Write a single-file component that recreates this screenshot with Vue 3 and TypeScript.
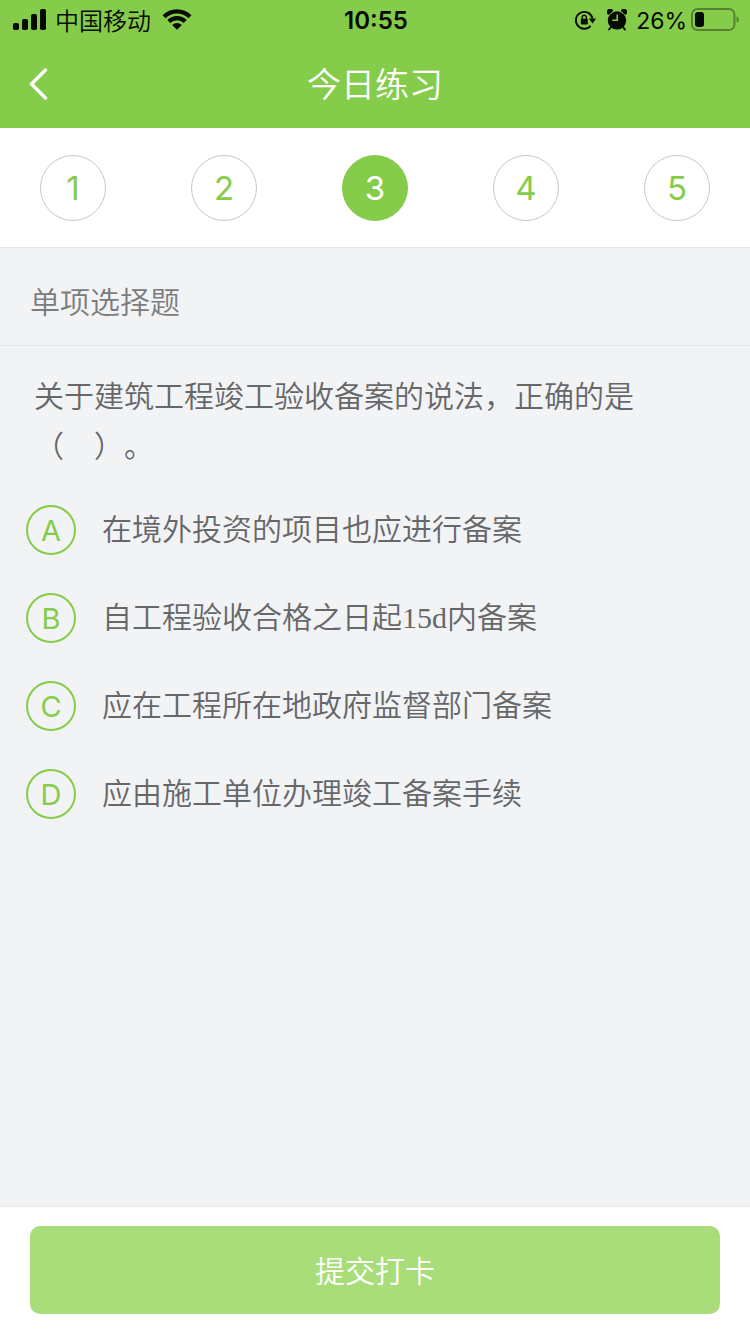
<script setup lang="ts">
import { ref } from 'vue'

interface Option {
  key: string
  text: string
}

const current = ref<number>(3)
const answer = ref<string>('')
const pages: number[] = [1, 2, 3, 4, 5]
const options: Option[] = [
  { key: 'A', text: '在境外投资的项目也应进行备案' },
  { key: 'B', text: '自工程验收合格之日起15d内备案' },
  { key: 'C', text: '应在工程所在地政府监督部门备案' },
  { key: 'D', text: '应由施工单位办理竣工备案手续' },
]
</script>

<template>
  <div class="screen">
    <header class="top">
      <div class="status">
        <div class="status-side">
          <svg class="signal" width="34" height="22" viewBox="0 0 34 22" aria-hidden="true">
            <rect x="0" y="14" width="6" height="7" rx="1.8" />
            <rect x="9" y="10" width="6" height="11" rx="1.8" />
            <rect x="18" y="5" width="6" height="16" rx="1.8" />
            <rect x="27" y="0" width="6" height="21" rx="1.8" />
          </svg>
          <span class="carrier">中国移动</span>
          <svg class="wifi" width="30" height="22" viewBox="0 0 30 22" aria-hidden="true">
            <path d="M0.5 6.2 A20.5 20.5 0 0 1 29.5 6.2 L26.5 9.2 A16.3 16.3 0 0 0 3.5 9.2 Z" />
            <path d="M5.3 11.1 A13.7 13.7 0 0 1 24.7 11.1 L21.7 14.1 A9.5 9.5 0 0 0 8.3 14.1 Z" />
            <path d="M10.1 15.9 A7 7 0 0 1 19.9 15.9 L15 20.8 Z" />
          </svg>
        </div>
        <time class="clock">10:55</time>
        <div class="status-side status-right">
          <svg class="lock" width="22" height="22" viewBox="0 0 22 22" aria-hidden="true">
            <path d="M18.4 9.2 A8.4 8.4 0 1 0 16.6 16.8" fill="none" stroke="#050a02" stroke-width="1.9" />
            <path d="M14.8 9.6 H22 L18.6 14.4 Z" />
            <rect x="6.8" y="9.8" width="7" height="5.8" rx="0.8" />
            <path d="M8.2 10.2 V8.4 A2.1 2.1 0 0 1 12.4 8.4 V10.2" fill="none" stroke="#050a02" stroke-width="1.4" />
          </svg>
          <svg class="alarm" width="20" height="22" viewBox="0 0 20 22" aria-hidden="true">
            <circle cx="10" cy="11.4" r="9.2" />
            <path d="M0.6 5 A3.2 3.2 0 0 1 5.6 0.8 L6.2 1.8 L1.6 6 Z" />
            <path d="M19.4 5 A3.2 3.2 0 0 0 14.4 0.8 L13.8 1.8 L18.4 6 Z" />
            <path d="M4 18 L2 20.6 M16 18 L18 20.6" stroke="#050a02" stroke-width="1.8" stroke-linecap="round" />
            <path d="M10.2 5.4 V11.2 H5.2" fill="none" stroke="#86cc4b" stroke-width="1.5" />
          </svg>
          <span class="percent">26%</span>
          <svg class="battery" width="48" height="24" viewBox="0 0 48 24" aria-hidden="true">
            <rect x="1" y="1" width="42.5" height="21" rx="5.5" fill="none" stroke="#568330" stroke-width="2" />
            <rect x="4" y="4" width="9" height="15" rx="3" />
            <path d="M45.6 8.2 Q48 9.2 48 11.5 Q48 13.8 45.6 14.8 Z" fill="#568330" />
          </svg>
        </div>
      </div>
      <nav class="nav">
        <button class="back" type="button" aria-label="返回">
          <svg width="20" height="32" viewBox="0 0 20 32" aria-hidden="true">
            <path d="M16.5 2 L2.5 16 L16.5 30" fill="none" stroke="#fff" stroke-width="3.4" stroke-linecap="round" stroke-linejoin="round" />
          </svg>
        </button>
        <h1 class="title">今日练习</h1>
      </nav>
    </header>

    <div class="pages">
      <button
        v-for="n in pages"
        :key="n"
        type="button"
        class="page"
        :class="{ active: n === current }"
        @click="current = n"
      >{{ n }}</button>
    </div>

    <main class="body">
      <h2 class="kind">单项选择题</h2>
      <fieldset class="quiz">
        <legend class="question">关于建筑工程竣工验收备案的说法，正确的是<br>（　）。</legend>
        <label v-for="o in options" :key="o.key" class="option">
          <span class="mark">
            <input v-model="answer" class="radio" type="radio" name="answer" :value="o.key">
            <span class="letter">{{ o.key }}</span>
          </span>
          <span class="text">{{ o.text }}</span>
        </label>
      </fieldset>
    </main>

    <footer class="footer">
      <button class="submit" type="button">提交打卡</button>
    </footer>
  </div>
</template>

<style>
body {
  margin: 0;
  background: #f2f3f5;
}
</style>

<style scoped>
.screen {
  display: flex;
  flex-direction: column;
  min-height: 100vh;
  background: #f2f3f5;
  font-family: Inter, "Noto Sans CJK SC", sans-serif;
  font-weight: 350;
  text-spacing-trim: space-all;
}

button {
  margin: 0;
  padding: 0;
  border: 0;
  background: none;
  font: inherit;
  cursor: pointer;
}

svg {
  display: block;
  flex: none;
  fill: #050a02;
}

.top {
  background: #86cc4b;
}

.status {
  display: grid;
  grid-template-columns: 1fr auto 1fr;
  align-items: center;
  height: 40px;
  padding: 0 11px 0 13px;
  color: #050a02;
  font-size: 24px;
  line-height: 36px;
}

.status-side {
  display: flex;
  align-items: center;
}

.status-right {
  justify-content: flex-end;
}

.carrier {
  margin: 0 11px 0 8px;
  padding-top: 4px;
}

.clock {
  padding-top: 2px;
  font-weight: 600;
}

.alarm {
  margin: 0 9px 0 11px;
}

.percent {
  margin-right: 4px;
  padding-top: 2px;
  font-size: 23px;
  font-weight: 380;
}

.nav {
  display: grid;
  grid-template-columns: 80px 1fr 80px;
  align-items: center;
  height: 88px;
}

.back {
  display: flex;
  align-items: center;
  height: 88px;
  padding-left: 29px;
}

.title {
  margin: 0;
  padding-top: 2px;
  color: #fff;
  font-size: 34px;
  font-weight: 350;
  line-height: 48px;
  text-align: center;
}

.pages {
  display: flex;
  justify-content: space-between;
  padding: 27px 40px 26px;
  border-bottom: 1px solid #e3e4e5;
  background: #fff;
}

.page {
  box-sizing: border-box;
  width: 66px;
  height: 66px;
  border: 1px solid #c8c8c8;
  border-radius: 50%;
  color: #86cc4b;
  font-size: 33px;
  font-weight: 380;
  line-height: 64px;
}

.page.active {
  border-color: #86cc4b;
  background: #86cc4b;
  color: #fff;
}

.body {
  flex: 1;
}

.kind {
  margin: 0;
  padding: 34px 30px 23px;
  border-bottom: 1px solid #e5e6e8;
  color: #7b7c7e;
  font-size: 30px;
  font-weight: 350;
  line-height: 40px;
}

.quiz {
  display: flex;
  flex-direction: column;
  gap: 38px;
  min-width: 0;
  margin: 0;
  padding: 0 26px 38px;
  border: 0;
  color: #666769;
  font-size: 30px;
}

.question {
  padding: 25px 8px 34px;
  line-height: 50px;
}

.option {
  display: flex;
  align-items: center;
  gap: 26px;
  cursor: pointer;
}

.mark {
  display: grid;
  flex: none;
  place-items: center;
  width: 50px;
  height: 50px;
}

.radio,
.letter {
  grid-area: 1 / 1;
}

.radio {
  box-sizing: border-box;
  width: 50px;
  height: 50px;
  margin: 0;
  border: 2px solid #86cc4b;
  border-radius: 50%;
  appearance: none;
}

.radio:checked {
  background: #86cc4b;
}

.letter {
  position: relative;
  padding-top: 2px;
  color: #86cc4b;
  font-size: 29px;
  font-weight: 380;
  line-height: 48px;
}

.radio:checked + .letter {
  color: #fff;
}

.text {
  font-family: "Liberation Serif", "Noto Sans CJK SC", sans-serif;
  line-height: 50px;
}

.footer {
  padding: 19px 30px 20px;
  border-top: 1px solid #e6e7e9;
  background: #fff;
}

.submit {
  width: 100%;
  height: 88px;
  padding-bottom: 3px;
  border-radius: 10px;
  background: #a9dd7a;
  color: #fff;
  font-size: 30px;
}
</style>
